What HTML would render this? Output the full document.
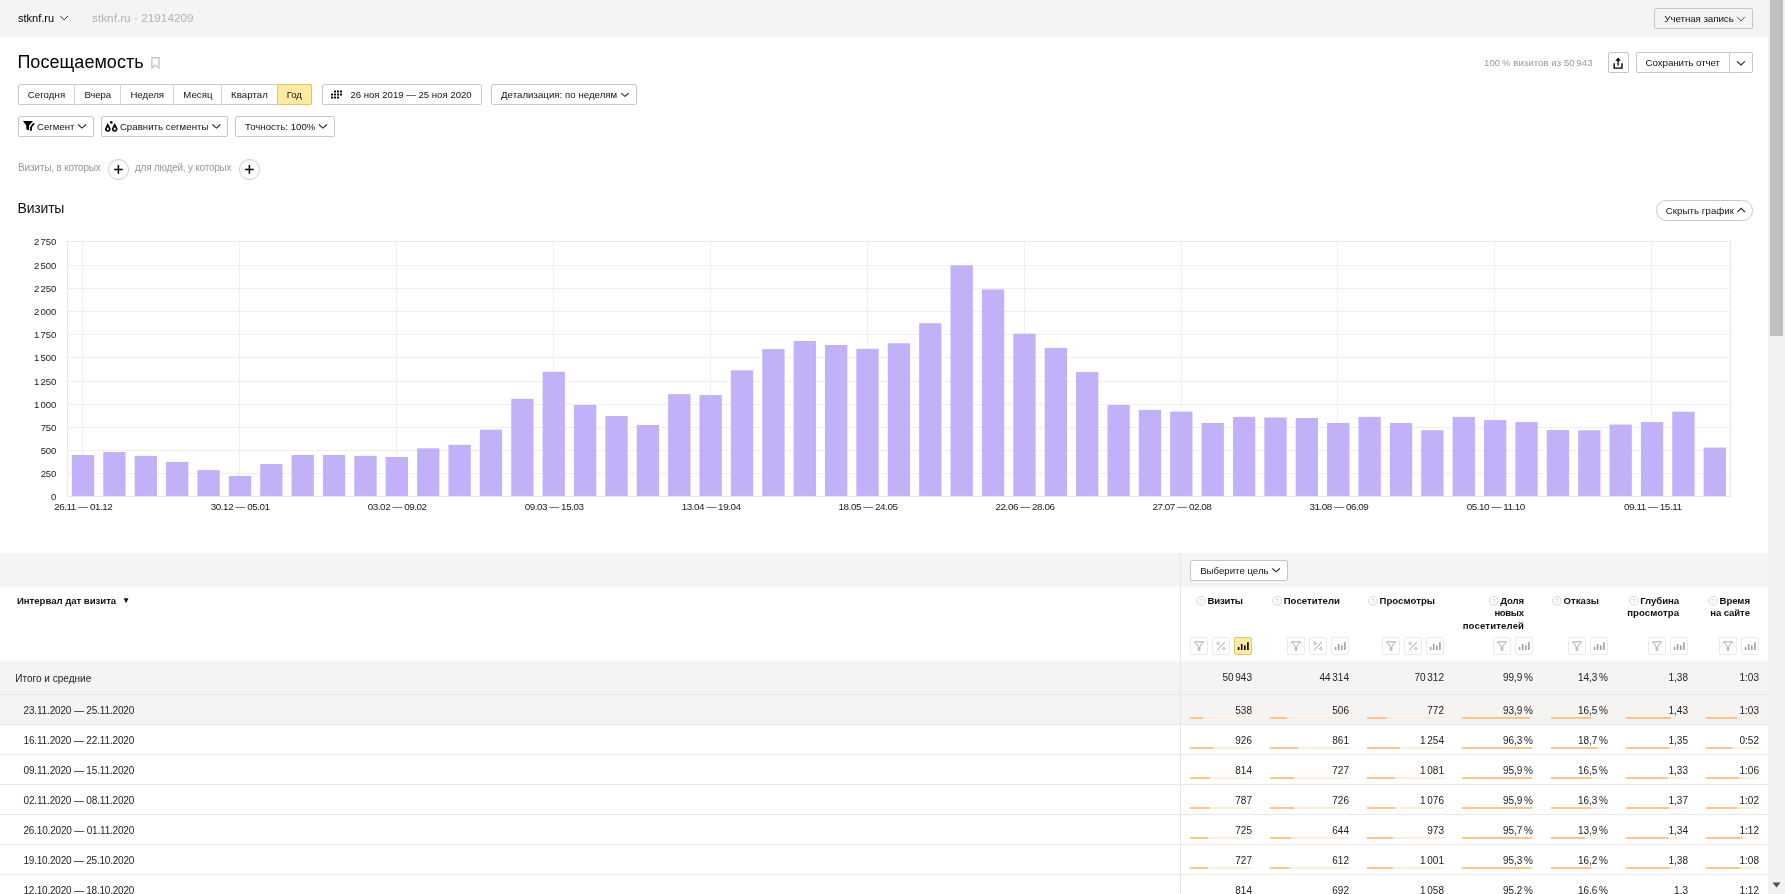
<!DOCTYPE html>
<html><head><meta charset="utf-8"><style>
*{margin:0;padding:0;box-sizing:border-box}
html,body{width:1785px;height:894px;overflow:hidden;background:#fff;font-family:"Liberation Sans", sans-serif;color:#000}
.a{position:absolute}
svg.a{overflow:visible}
.t{position:absolute;white-space:nowrap}
.trk{position:absolute;height:2px;background:#ffefe0}
.trk i{display:block;height:2px;background:#ffc48c}
</style></head><body>
<div id="root" style="position:absolute;left:0;top:0;width:1785px;height:894px;background:#fff;will-change:transform">
<div class="a" style="left:0;top:0;width:1768px;height:37px;background:#f5f4f2"></div>
<div class="t" style="top:13.08px;font-size:11px;line-height:11px;color:#000;left:18.00px;">stknf.ru</div>
<div class="t" style="top:13.21px;font-size:11.8px;line-height:11.8px;color:#b3b3b3;left:92.00px;">stknf.ru · 21914209</div>
<div class="a" style="left:1654px;top:8px;width:99px;height:21px;background:#f5f4f2;border:1px solid #c6c6c6;border-radius:2px;"></div>
<div class="t" style="top:13.70px;font-size:9.8px;line-height:9.8px;color:#111;letter-spacing:-0.082px;left:1664.30px;">Учетная запись</div>
<svg class="a" style="left:0;top:0" width="1785" height="894"><polyline points="60.2,16 64.1,19.8 68,16" fill="none" stroke="#222" stroke-width="0.95"/><polyline points="1737.2,16.9 1741,21 1744.8,16.9" fill="none" stroke="#333" stroke-width="0.85"/></svg>
<div class="a" style="left:1768px;top:0;width:17px;height:894px;background:#f1f1f1"></div>
<div class="a" style="left:1770px;top:0;width:13px;height:336px;background:#c1c1c1"></div>
<svg class="a" style="left:0;top:0" width="1785" height="894"><polygon points="1772.5,882.5 1780.5,882.5 1776.5,887.5" fill="#505050"/></svg>
<div class="t" style="top:52.55px;font-size:18px;line-height:18px;color:#000;letter-spacing:0.037px;left:17.40px;">Посещаемость</div>
<svg class="a" style="left:0;top:0" width="1785" height="894"><path d="M151.9,57.8 H159 V68 L155.45,65.2 L151.9,68 Z" fill="none" stroke="#c8c8c8" stroke-width="1.4"/></svg>
<div class="t" style="top:57.87px;font-size:9.6px;line-height:9.6px;color:#999;letter-spacing:0.061px;right:192.44px;text-align:right;">100 % визитов из 50 943</div>
<div class="a" style="left:1608px;top:52px;width:21px;height:21px;background:#fff;border:1px solid #c6c6c6;border-radius:2px;"></div>
<svg class="a" style="left:0;top:0" width="1785" height="894"><path d="M1614.2,63.2 V68.1 H1622 V63.2" fill="none" stroke="#000" stroke-width="1.35"/><path d="M1618.1,65.6 V60" stroke="#000" stroke-width="1.35"/><polygon points="1615.3,60.8 1618.1,57.4 1620.9,60.8" fill="#000"/></svg>
<div class="a" style="left:1636px;top:52px;width:117px;height:21px;background:#fff;border:1px solid #c6c6c6;border-radius:2px;"></div>
<div class="a" style="left:1729px;top:52px;width:1px;height:21px;background:#d2d2d2"></div>
<div class="t" style="top:57.80px;font-size:9.8px;line-height:9.8px;color:#111;letter-spacing:-0.090px;left:1645.50px;">Сохранить отчет</div>
<svg class="a" style="left:0;top:0" width="1785" height="894"><polyline points="1737,61.4 1740.95,65.0 1744.9,61.4" fill="none" stroke="#222" stroke-width="1.05"/></svg>
<div class="a" style="left:18px;top:84px;width:294px;height:21px;background:#fff;border:1px solid #c9c9c9;border-radius:2px;"></div>
<div class="a" style="left:74px;top:84px;width:1px;height:21px;background:#d6d6d6"></div>
<div class="a" style="left:120px;top:84px;width:1px;height:21px;background:#d6d6d6"></div>
<div class="a" style="left:173px;top:84px;width:1px;height:21px;background:#d6d6d6"></div>
<div class="a" style="left:221px;top:84px;width:1px;height:21px;background:#d6d6d6"></div>
<div class="a" style="left:277px;top:84px;width:35px;height:21px;background:#ffeba0;border:1px solid #e3c565;border-radius:2px;"></div>
<div class="t" style="top:89.87px;font-size:9.6px;line-height:9.6px;color:#111;letter-spacing:0.085px;left:27.80px;">Сегодня</div>
<div class="t" style="top:89.87px;font-size:9.6px;line-height:9.6px;color:#111;letter-spacing:-0.101px;left:84.40px;">Вчера</div>
<div class="t" style="top:89.87px;font-size:9.6px;line-height:9.6px;color:#111;letter-spacing:0.043px;left:130.40px;">Неделя</div>
<div class="t" style="top:89.87px;font-size:9.6px;line-height:9.6px;color:#111;letter-spacing:0.090px;left:183.20px;">Месяц</div>
<div class="t" style="top:89.87px;font-size:9.6px;line-height:9.6px;color:#111;letter-spacing:0.086px;left:231.00px;">Квартал</div>
<div class="t" style="top:89.87px;font-size:9.6px;line-height:9.6px;color:#111;letter-spacing:-0.143px;left:286.80px;">Год</div>
<div class="a" style="left:322px;top:84px;width:160px;height:21px;background:#fff;border:1px solid #c9c9c9;border-radius:2px;"></div>
<svg class="a" style="left:0;top:0" width="1785" height="894"><rect x="331" y="93.5" width="2" height="2" rx="0.5" fill="#000"/><rect x="331" y="96.5" width="2" height="2" rx="0.5" fill="#000"/><rect x="334" y="90.5" width="2" height="2" rx="0.5" fill="#000"/><rect x="334" y="93.5" width="2" height="2" rx="0.5" fill="#000"/><rect x="334" y="96.5" width="2" height="2" rx="0.5" fill="#000"/><rect x="337" y="90.5" width="2" height="2" rx="0.5" fill="#000"/><rect x="337" y="93.5" width="2" height="2" rx="0.5" fill="#000"/><rect x="337" y="96.5" width="2" height="2" rx="0.5" fill="#000"/><rect x="340" y="90.5" width="2" height="2" rx="0.5" fill="#000"/><rect x="340" y="93.5" width="2" height="2" rx="0.5" fill="#000"/></svg>
<div class="t" style="top:89.87px;font-size:9.6px;line-height:9.6px;color:#111;left:350.40px;">26 ноя 2019 — 25 ноя 2020</div>
<div class="a" style="left:491px;top:84px;width:146px;height:21px;background:#fff;border:1px solid #c9c9c9;border-radius:2px;"></div>
<div class="t" style="top:89.87px;font-size:9.6px;line-height:9.6px;color:#111;letter-spacing:0.063px;left:501.00px;">Детализация: по неделям</div>
<svg class="a" style="left:0;top:0" width="1785" height="894"><polyline points="621.2,93.2 625.0,96.4 628.8000000000001,93.2" fill="none" stroke="#222" stroke-width="1.05"/></svg>
<div class="a" style="left:18px;top:116px;width:76px;height:21px;background:#fff;border:1px solid #c9c9c9;border-radius:2px;"></div>
<svg class="a" style="left:0;top:0" width="1785" height="894"><path d="M23,121.1 H33 L29.1,125.6 V130.6 L26.3,129.2 V125.6 Z" fill="#000"/><polygon points="32.9,123.2 34.9,123.2 31.9,127.4 31.9,130.8 30.1,130.8 30.1,126.9" fill="#000"/></svg>
<div class="t" style="top:121.87px;font-size:9.6px;line-height:9.6px;color:#111;left:37.10px;">Сегмент</div>
<svg class="a" style="left:0;top:0" width="1785" height="894"><polyline points="78,124.5 82.0,128.1 86,124.5" fill="none" stroke="#222" stroke-width="1.05"/></svg>
<div class="a" style="left:101px;top:116px;width:127px;height:21px;background:#fff;border:1px solid #c9c9c9;border-radius:2px;"></div>
<svg class="a" style="left:0;top:0" width="1785" height="894"><path d="M107.8,122.9 L105.2,128.2 A2.75,2.75 0 1 0 110.4,128.2 Z" fill="#000"/><path d="M114.7,122.9 L112.1,128.2 A2.75,2.75 0 1 0 117.3,128.2 Z" fill="#000"/><ellipse cx="107.8" cy="128.9" rx="1.1" ry="1.4" fill="#fff"/><ellipse cx="114.7" cy="128.9" rx="1.1" ry="1.4" fill="#fff"/><circle cx="111.3" cy="122.4" r="1.3" fill="#000"/></svg>
<div class="t" style="top:121.87px;font-size:9.6px;line-height:9.6px;color:#111;letter-spacing:0.055px;left:119.90px;">Сравнить сегменты</div>
<svg class="a" style="left:0;top:0" width="1785" height="894"><polyline points="212.4,124.5 216.4,128.1 220.4,124.5" fill="none" stroke="#222" stroke-width="1.05"/></svg>
<div class="a" style="left:235px;top:116px;width:100px;height:21px;background:#fff;border:1px solid #c9c9c9;border-radius:2px;"></div>
<div class="t" style="top:121.87px;font-size:9.6px;line-height:9.6px;color:#111;letter-spacing:0.033px;left:245.00px;">Точность: 100%</div>
<svg class="a" style="left:0;top:0" width="1785" height="894"><polyline points="318.8,124.5 322.90000000000003,128.1 327.0,124.5" fill="none" stroke="#222" stroke-width="1.05"/></svg>
<div class="t" style="top:162.63px;font-size:10px;line-height:10px;color:#999;letter-spacing:-0.166px;left:18.00px;">Визиты, в которых</div>
<div class="t" style="top:162.63px;font-size:10px;line-height:10px;color:#999;letter-spacing:-0.232px;left:135.00px;">для людей, у которых</div>
<div class="a" style="left:108.0px;top:159px;width:20.8px;height:20.8px;border:1px solid #c9c9c9;border-radius:50%"></div>
<svg class="a" style="left:0;top:0" width="1785" height="894"><path d="M114.1,169.4 H122.7 M118.4,165.1 V173.7" stroke="#000" stroke-width="1.5"/></svg>
<div class="a" style="left:239.0px;top:159px;width:20.8px;height:20.8px;border:1px solid #c9c9c9;border-radius:50%"></div>
<svg class="a" style="left:0;top:0" width="1785" height="894"><path d="M245.1,169.4 H253.7 M249.4,165.1 V173.7" stroke="#000" stroke-width="1.5"/></svg>
<div class="t" style="top:201.04px;font-size:14px;line-height:14px;color:#111;letter-spacing:-0.214px;left:17.60px;">Визиты</div>
<div class="a" style="left:1656px;top:200px;width:97px;height:21px;background:#fff;border:1px solid #c9c9c9;border-radius:11px;"></div>
<div class="t" style="top:205.87px;font-size:9.6px;line-height:9.6px;color:#111;letter-spacing:0.093px;left:1665.80px;">Скрыть график</div>
<svg class="a" style="left:0;top:0" width="1785" height="894"><polyline points="1737.3,212.10000000000002 1741.2,208.3 1745.1,212.10000000000002" fill="none" stroke="#222" stroke-width="1.05"/></svg>
<svg class="a" style="left:0;top:0" width="1768" height="894" font-family='"Liberation Sans", sans-serif'><line x1="67" y1="473.5" x2="1731" y2="473.5" stroke="#efefef" stroke-width="1"/><line x1="67" y1="450.5" x2="1731" y2="450.5" stroke="#efefef" stroke-width="1"/><line x1="67" y1="427.5" x2="1731" y2="427.5" stroke="#efefef" stroke-width="1"/><line x1="67" y1="404.5" x2="1731" y2="404.5" stroke="#efefef" stroke-width="1"/><line x1="67" y1="381.5" x2="1731" y2="381.5" stroke="#efefef" stroke-width="1"/><line x1="67" y1="357.5" x2="1731" y2="357.5" stroke="#efefef" stroke-width="1"/><line x1="67" y1="334.5" x2="1731" y2="334.5" stroke="#efefef" stroke-width="1"/><line x1="67" y1="311.5" x2="1731" y2="311.5" stroke="#efefef" stroke-width="1"/><line x1="67" y1="288.5" x2="1731" y2="288.5" stroke="#efefef" stroke-width="1"/><line x1="67" y1="265.5" x2="1731" y2="265.5" stroke="#efefef" stroke-width="1"/><line x1="82.5" y1="242" x2="82.5" y2="496" stroke="#efefef" stroke-width="1"/><line x1="239.5" y1="242" x2="239.5" y2="496" stroke="#efefef" stroke-width="1"/><line x1="396.5" y1="242" x2="396.5" y2="496" stroke="#efefef" stroke-width="1"/><line x1="553.5" y1="242" x2="553.5" y2="496" stroke="#efefef" stroke-width="1"/><line x1="710.5" y1="242" x2="710.5" y2="496" stroke="#efefef" stroke-width="1"/><line x1="867.5" y1="242" x2="867.5" y2="496" stroke="#efefef" stroke-width="1"/><line x1="1024.5" y1="242" x2="1024.5" y2="496" stroke="#efefef" stroke-width="1"/><line x1="1181.5" y1="242" x2="1181.5" y2="496" stroke="#efefef" stroke-width="1"/><line x1="1337.5" y1="242" x2="1337.5" y2="496" stroke="#efefef" stroke-width="1"/><line x1="1494.5" y1="242" x2="1494.5" y2="496" stroke="#efefef" stroke-width="1"/><line x1="1651.5" y1="242" x2="1651.5" y2="496" stroke="#efefef" stroke-width="1"/><rect x="67.5" y="241.5" width="1663" height="255" fill="none" stroke="#e8e8e8" stroke-width="1"/><rect x="71.90" y="454.98" width="22.3" height="40.92" fill="#c2b0f8"/><rect x="103.28" y="452.07" width="22.3" height="43.83" fill="#c2b0f8"/><rect x="134.66" y="455.85" width="22.3" height="40.05" fill="#c2b0f8"/><rect x="166.04" y="461.96" width="22.3" height="33.94" fill="#c2b0f8"/><rect x="197.42" y="470.11" width="22.3" height="25.79" fill="#c2b0f8"/><rect x="228.80" y="475.93" width="22.3" height="19.97" fill="#c2b0f8"/><rect x="260.18" y="464.00" width="22.3" height="31.90" fill="#c2b0f8"/><rect x="291.56" y="454.98" width="22.3" height="40.92" fill="#c2b0f8"/><rect x="322.94" y="454.98" width="22.3" height="40.92" fill="#c2b0f8"/><rect x="354.32" y="455.85" width="22.3" height="40.05" fill="#c2b0f8"/><rect x="385.70" y="457.02" width="22.3" height="38.88" fill="#c2b0f8"/><rect x="417.08" y="448.29" width="22.3" height="47.61" fill="#c2b0f8"/><rect x="448.46" y="444.80" width="22.3" height="51.10" fill="#c2b0f8"/><rect x="479.84" y="429.67" width="22.3" height="66.23" fill="#c2b0f8"/><rect x="511.22" y="398.84" width="22.3" height="97.06" fill="#c2b0f8"/><rect x="542.60" y="371.78" width="22.3" height="124.12" fill="#c2b0f8"/><rect x="573.98" y="404.95" width="22.3" height="90.95" fill="#c2b0f8"/><rect x="605.36" y="416.00" width="22.3" height="79.90" fill="#c2b0f8"/><rect x="636.74" y="425.02" width="22.3" height="70.88" fill="#c2b0f8"/><rect x="668.12" y="394.18" width="22.3" height="101.72" fill="#c2b0f8"/><rect x="699.50" y="395.05" width="22.3" height="100.85" fill="#c2b0f8"/><rect x="730.88" y="370.33" width="22.3" height="125.57" fill="#c2b0f8"/><rect x="762.26" y="349.09" width="22.3" height="146.81" fill="#c2b0f8"/><rect x="793.64" y="340.95" width="22.3" height="154.95" fill="#c2b0f8"/><rect x="825.02" y="345.02" width="22.3" height="150.88" fill="#c2b0f8"/><rect x="856.40" y="348.80" width="22.3" height="147.10" fill="#c2b0f8"/><rect x="887.78" y="343.27" width="22.3" height="152.63" fill="#c2b0f8"/><rect x="919.16" y="323.20" width="22.3" height="172.70" fill="#c2b0f8"/><rect x="950.54" y="265.31" width="22.3" height="230.59" fill="#c2b0f8"/><rect x="981.92" y="289.45" width="22.3" height="206.45" fill="#c2b0f8"/><rect x="1013.30" y="333.67" width="22.3" height="162.23" fill="#c2b0f8"/><rect x="1044.68" y="347.93" width="22.3" height="147.97" fill="#c2b0f8"/><rect x="1076.06" y="372.07" width="22.3" height="123.83" fill="#c2b0f8"/><rect x="1107.44" y="404.95" width="22.3" height="90.95" fill="#c2b0f8"/><rect x="1138.82" y="409.89" width="22.3" height="86.01" fill="#c2b0f8"/><rect x="1170.20" y="411.64" width="22.3" height="84.26" fill="#c2b0f8"/><rect x="1201.58" y="422.98" width="22.3" height="72.92" fill="#c2b0f8"/><rect x="1232.96" y="416.87" width="22.3" height="79.03" fill="#c2b0f8"/><rect x="1264.34" y="417.45" width="22.3" height="78.45" fill="#c2b0f8"/><rect x="1295.72" y="418.04" width="22.3" height="77.86" fill="#c2b0f8"/><rect x="1327.10" y="422.98" width="22.3" height="72.92" fill="#c2b0f8"/><rect x="1358.48" y="416.87" width="22.3" height="79.03" fill="#c2b0f8"/><rect x="1389.86" y="422.98" width="22.3" height="72.92" fill="#c2b0f8"/><rect x="1421.24" y="430.25" width="22.3" height="65.65" fill="#c2b0f8"/><rect x="1452.62" y="416.87" width="22.3" height="79.03" fill="#c2b0f8"/><rect x="1484.00" y="420.07" width="22.3" height="75.83" fill="#c2b0f8"/><rect x="1515.38" y="422.09" width="22.3" height="73.81" fill="#c2b0f8"/><rect x="1546.76" y="430.13" width="22.3" height="65.77" fill="#c2b0f8"/><rect x="1578.14" y="430.31" width="22.3" height="65.59" fill="#c2b0f8"/><rect x="1609.52" y="424.58" width="22.3" height="71.32" fill="#c2b0f8"/><rect x="1640.90" y="422.09" width="22.3" height="73.81" fill="#c2b0f8"/><rect x="1672.28" y="411.74" width="22.3" height="84.16" fill="#c2b0f8"/><rect x="1703.66" y="447.59" width="22.3" height="48.31" fill="#c2b0f8"/><text x="56.2" y="500.4" text-anchor="end" font-size="9.6" letter-spacing="-0.15" fill="#222">0</text><text x="56.2" y="477.4" text-anchor="end" font-size="9.6" letter-spacing="-0.15" fill="#222">250</text><text x="56.2" y="454.4" text-anchor="end" font-size="9.6" letter-spacing="-0.15" fill="#222">500</text><text x="56.2" y="431.4" text-anchor="end" font-size="9.6" letter-spacing="-0.15" fill="#222">750</text><text x="56.2" y="408.4" text-anchor="end" font-size="9.6" letter-spacing="-0.15" fill="#222">1 000</text><text x="56.2" y="385.4" text-anchor="end" font-size="9.6" letter-spacing="-0.15" fill="#222">1 250</text><text x="56.2" y="361.4" text-anchor="end" font-size="9.6" letter-spacing="-0.15" fill="#222">1 500</text><text x="56.2" y="338.4" text-anchor="end" font-size="9.6" letter-spacing="-0.15" fill="#222">1 750</text><text x="56.2" y="315.4" text-anchor="end" font-size="9.6" letter-spacing="-0.15" fill="#222">2 000</text><text x="56.2" y="292.4" text-anchor="end" font-size="9.6" letter-spacing="-0.15" fill="#222">2 250</text><text x="56.2" y="269.4" text-anchor="end" font-size="9.6" letter-spacing="-0.15" fill="#222">2 500</text><text x="56.2" y="245.4" text-anchor="end" font-size="9.6" letter-spacing="-0.15" fill="#222">2 750</text><text x="83.3" y="510.2" text-anchor="middle" font-size="9.9" letter-spacing="-0.45" fill="#222">26.11 — 01.12</text><text x="240.2" y="510.2" text-anchor="middle" font-size="9.9" letter-spacing="-0.45" fill="#222">30.12 — 05.01</text><text x="397.2" y="510.2" text-anchor="middle" font-size="9.9" letter-spacing="-0.45" fill="#222">03.02 — 09.02</text><text x="554.1" y="510.2" text-anchor="middle" font-size="9.9" letter-spacing="-0.45" fill="#222">09.03 — 15.03</text><text x="711.1" y="510.2" text-anchor="middle" font-size="9.9" letter-spacing="-0.45" fill="#222">13.04 — 19.04</text><text x="868.0" y="510.2" text-anchor="middle" font-size="9.9" letter-spacing="-0.45" fill="#222">18.05 — 24.05</text><text x="1025.0" y="510.2" text-anchor="middle" font-size="9.9" letter-spacing="-0.45" fill="#222">22.06 — 28.06</text><text x="1181.9" y="510.2" text-anchor="middle" font-size="9.9" letter-spacing="-0.45" fill="#222">27.07 — 02.08</text><text x="1338.9" y="510.2" text-anchor="middle" font-size="9.9" letter-spacing="-0.45" fill="#222">31.08 — 06.09</text><text x="1495.8" y="510.2" text-anchor="middle" font-size="9.9" letter-spacing="-0.45" fill="#222">05.10 — 11.10</text><text x="1652.8" y="510.2" text-anchor="middle" font-size="9.9" letter-spacing="-0.45" fill="#222">09.11 — 15.11</text></svg>
<div class="a" style="left:0;top:553px;width:1768px;height:34px;background:#f5f4f2"></div>
<div class="a" style="left:0;top:661px;width:1768px;height:63px;background:#f5f4f2"></div>
<div class="a" style="left:1180px;top:553px;width:1px;height:341px;background:#e6e6e6"></div>
<div class="a" style="left:1190px;top:560px;width:98px;height:21px;background:#fff;border:1px solid #c6c6c6;border-radius:2px;"></div>
<div class="t" style="top:566.17px;font-size:9.6px;line-height:9.6px;color:#111;letter-spacing:0.030px;left:1200.20px;">Выберите цель</div>
<svg class="a" style="left:0;top:0" width="1785" height="894"><polyline points="1272.4,568.5 1276.1000000000001,571.9 1279.8000000000002,568.5" fill="none" stroke="#222" stroke-width="1.05"/></svg>
<div class="t" style="top:595.87px;font-size:9.6px;line-height:9.6px;color:#111;font-weight:bold;letter-spacing:-0.033px;left:17.00px;">Интервал дат визита</div>
<svg class="a" style="left:0;top:0" width="1785" height="894"><polygon points="123.7,598.3 128.5,598.3 126.1,603.3" fill="#111"/></svg>
<div class="t" style="top:595.97px;font-size:9.6px;line-height:9.6px;color:#111;font-weight:bold;letter-spacing:-0.162px;right:542.16px;text-align:right;">Визиты</div>
<div class="a" style="left:1234px;top:637px;width:18px;height:18px;background:#ffeba0;border:1px solid #e2c667;border-radius:2px;"></div>
<div class="a" style="left:1212px;top:637px;width:18px;height:18px;background:#fff;border:1px solid #ebebeb;border-radius:2px;"></div>
<div class="a" style="left:1190px;top:637px;width:18px;height:18px;background:#fff;border:1px solid #ebebeb;border-radius:2px;"></div>
<div class="t" style="top:595.97px;font-size:9.6px;line-height:9.6px;color:#111;font-weight:bold;letter-spacing:0.063px;right:444.94px;text-align:right;">Посетители</div>
<div class="a" style="left:1331px;top:637px;width:18px;height:18px;background:#fff;border:1px solid #ebebeb;border-radius:2px;"></div>
<div class="a" style="left:1309px;top:637px;width:18px;height:18px;background:#fff;border:1px solid #ebebeb;border-radius:2px;"></div>
<div class="a" style="left:1287px;top:637px;width:18px;height:18px;background:#fff;border:1px solid #ebebeb;border-radius:2px;"></div>
<div class="t" style="top:595.97px;font-size:9.6px;line-height:9.6px;color:#111;font-weight:bold;letter-spacing:0.049px;right:349.95px;text-align:right;">Просмотры</div>
<div class="a" style="left:1426px;top:637px;width:18px;height:18px;background:#fff;border:1px solid #ebebeb;border-radius:2px;"></div>
<div class="a" style="left:1404px;top:637px;width:18px;height:18px;background:#fff;border:1px solid #ebebeb;border-radius:2px;"></div>
<div class="a" style="left:1382px;top:637px;width:18px;height:18px;background:#fff;border:1px solid #ebebeb;border-radius:2px;"></div>
<div class="t" style="top:595.97px;font-size:9.6px;line-height:9.6px;color:#111;font-weight:bold;letter-spacing:-0.194px;right:261.19px;text-align:right;">Доля</div>
<div class="t" style="top:608.42px;font-size:9.6px;line-height:9.6px;color:#111;font-weight:bold;letter-spacing:-0.375px;right:261.38px;text-align:right;">новых</div>
<div class="t" style="top:620.87px;font-size:9.6px;line-height:9.6px;color:#111;font-weight:bold;letter-spacing:0.146px;right:260.85px;text-align:right;">посетителей</div>
<div class="a" style="left:1515px;top:637px;width:18px;height:18px;background:#fff;border:1px solid #ebebeb;border-radius:2px;"></div>
<div class="a" style="left:1493px;top:637px;width:18px;height:18px;background:#fff;border:1px solid #ebebeb;border-radius:2px;"></div>
<div class="t" style="top:595.97px;font-size:9.6px;line-height:9.6px;color:#111;font-weight:bold;letter-spacing:0.020px;right:185.98px;text-align:right;">Отказы</div>
<div class="a" style="left:1590px;top:637px;width:18px;height:18px;background:#fff;border:1px solid #ebebeb;border-radius:2px;"></div>
<div class="a" style="left:1568px;top:637px;width:18px;height:18px;background:#fff;border:1px solid #ebebeb;border-radius:2px;"></div>
<div class="t" style="top:595.97px;font-size:9.6px;line-height:9.6px;color:#111;font-weight:bold;letter-spacing:-0.074px;right:106.07px;text-align:right;">Глубина</div>
<div class="t" style="top:608.42px;font-size:9.6px;line-height:9.6px;color:#111;font-weight:bold;letter-spacing:0.082px;right:105.92px;text-align:right;">просмотра</div>
<div class="a" style="left:1670px;top:637px;width:18px;height:18px;background:#fff;border:1px solid #ebebeb;border-radius:2px;"></div>
<div class="a" style="left:1648px;top:637px;width:18px;height:18px;background:#fff;border:1px solid #ebebeb;border-radius:2px;"></div>
<div class="t" style="top:595.97px;font-size:9.6px;line-height:9.6px;color:#111;font-weight:bold;letter-spacing:-0.053px;right:35.05px;text-align:right;">Время</div>
<div class="t" style="top:608.42px;font-size:9.6px;line-height:9.6px;color:#111;font-weight:bold;letter-spacing:-0.106px;right:35.11px;text-align:right;">на сайте</div>
<div class="a" style="left:1741px;top:637px;width:18px;height:18px;background:#fff;border:1px solid #ebebeb;border-radius:2px;"></div>
<div class="a" style="left:1719px;top:637px;width:18px;height:18px;background:#fff;border:1px solid #ebebeb;border-radius:2px;"></div>
<svg class="a" style="left:0;top:0" width="1785" height="894" font-family='"Liberation Sans", sans-serif'><circle cx="1200.9" cy="600.8" r="4.3" fill="none" stroke="#d0d0d0" stroke-width="0.9"/><text x="1200.9" y="603.2" font-size="6" text-anchor="middle" fill="#c8c8c8">?</text><rect x="1237.8" y="647.0" width="1.6" height="3" fill="#000"/><rect x="1240.9" y="644.0" width="1.6" height="6" fill="#000"/><rect x="1244.0" y="645.4" width="1.6" height="4.6" fill="#000"/><rect x="1247.1" y="642.2" width="1.6" height="7.8" fill="#000"/><path d="M1225.0,641.8 L1217.0,650.2" stroke="#a0a0a0" stroke-width="0.9"/><circle cx="1218.2" cy="643.4" r="1.1" fill="none" stroke="#a0a0a0" stroke-width="0.8"/><circle cx="1223.8" cy="648.6" r="1.1" fill="none" stroke="#a0a0a0" stroke-width="0.8"/><path d="M1194.5,641.8 H1203.5 L1199.8,646.3 V650.3 H1198.2 V646.3 Z" fill="none" stroke="#a0a0a0" stroke-width="0.9"/><circle cx="1277.1" cy="600.8" r="4.3" fill="none" stroke="#d0d0d0" stroke-width="0.9"/><text x="1277.1" y="603.2" font-size="6" text-anchor="middle" fill="#c8c8c8">?</text><rect x="1334.8" y="647.0" width="1.6" height="3" fill="#a0a0a0"/><rect x="1337.9" y="644.0" width="1.6" height="6" fill="#a0a0a0"/><rect x="1341.0" y="645.4" width="1.6" height="4.6" fill="#a0a0a0"/><rect x="1344.1" y="642.2" width="1.6" height="7.8" fill="#a0a0a0"/><path d="M1322.0,641.8 L1314.0,650.2" stroke="#a0a0a0" stroke-width="0.9"/><circle cx="1315.2" cy="643.4" r="1.1" fill="none" stroke="#a0a0a0" stroke-width="0.8"/><circle cx="1320.8" cy="648.6" r="1.1" fill="none" stroke="#a0a0a0" stroke-width="0.8"/><path d="M1291.5,641.8 H1300.5 L1296.8,646.3 V650.3 H1295.2 V646.3 Z" fill="none" stroke="#a0a0a0" stroke-width="0.9"/><circle cx="1372.9" cy="600.8" r="4.3" fill="none" stroke="#d0d0d0" stroke-width="0.9"/><text x="1372.9" y="603.2" font-size="6" text-anchor="middle" fill="#c8c8c8">?</text><rect x="1429.8" y="647.0" width="1.6" height="3" fill="#a0a0a0"/><rect x="1432.9" y="644.0" width="1.6" height="6" fill="#a0a0a0"/><rect x="1436.0" y="645.4" width="1.6" height="4.6" fill="#a0a0a0"/><rect x="1439.1" y="642.2" width="1.6" height="7.8" fill="#a0a0a0"/><path d="M1417.0,641.8 L1409.0,650.2" stroke="#a0a0a0" stroke-width="0.9"/><circle cx="1410.2" cy="643.4" r="1.1" fill="none" stroke="#a0a0a0" stroke-width="0.8"/><circle cx="1415.8" cy="648.6" r="1.1" fill="none" stroke="#a0a0a0" stroke-width="0.8"/><path d="M1386.5,641.8 H1395.5 L1391.8,646.3 V650.3 H1390.2 V646.3 Z" fill="none" stroke="#a0a0a0" stroke-width="0.9"/><circle cx="1493.8" cy="600.8" r="4.3" fill="none" stroke="#d0d0d0" stroke-width="0.9"/><text x="1493.8" y="603.2" font-size="6" text-anchor="middle" fill="#c8c8c8">?</text><rect x="1518.8" y="647.0" width="1.6" height="3" fill="#a0a0a0"/><rect x="1521.9" y="644.0" width="1.6" height="6" fill="#a0a0a0"/><rect x="1525.0" y="645.4" width="1.6" height="4.6" fill="#a0a0a0"/><rect x="1528.1" y="642.2" width="1.6" height="7.8" fill="#a0a0a0"/><path d="M1497.5,641.8 H1506.5 L1502.8,646.3 V650.3 H1501.2 V646.3 Z" fill="none" stroke="#a0a0a0" stroke-width="0.9"/><circle cx="1557.0" cy="600.8" r="4.3" fill="none" stroke="#d0d0d0" stroke-width="0.9"/><text x="1557.0" y="603.2" font-size="6" text-anchor="middle" fill="#c8c8c8">?</text><rect x="1593.8" y="647.0" width="1.6" height="3" fill="#a0a0a0"/><rect x="1596.9" y="644.0" width="1.6" height="6" fill="#a0a0a0"/><rect x="1600.0" y="645.4" width="1.6" height="4.6" fill="#a0a0a0"/><rect x="1603.1" y="642.2" width="1.6" height="7.8" fill="#a0a0a0"/><path d="M1572.5,641.8 H1581.5 L1577.8,646.3 V650.3 H1576.2 V646.3 Z" fill="none" stroke="#a0a0a0" stroke-width="0.9"/><circle cx="1633.7" cy="600.8" r="4.3" fill="none" stroke="#d0d0d0" stroke-width="0.9"/><text x="1633.7" y="603.2" font-size="6" text-anchor="middle" fill="#c8c8c8">?</text><rect x="1673.8" y="647.0" width="1.6" height="3" fill="#a0a0a0"/><rect x="1676.9" y="644.0" width="1.6" height="6" fill="#a0a0a0"/><rect x="1680.0" y="645.4" width="1.6" height="4.6" fill="#a0a0a0"/><rect x="1683.1" y="642.2" width="1.6" height="7.8" fill="#a0a0a0"/><path d="M1652.5,641.8 H1661.5 L1657.8,646.3 V650.3 H1656.2 V646.3 Z" fill="none" stroke="#a0a0a0" stroke-width="0.9"/><circle cx="1713.0" cy="600.8" r="4.3" fill="none" stroke="#d0d0d0" stroke-width="0.9"/><text x="1713.0" y="603.2" font-size="6" text-anchor="middle" fill="#c8c8c8">?</text><rect x="1744.8" y="647.0" width="1.6" height="3" fill="#a0a0a0"/><rect x="1747.9" y="644.0" width="1.6" height="6" fill="#a0a0a0"/><rect x="1751.0" y="645.4" width="1.6" height="4.6" fill="#a0a0a0"/><rect x="1754.1" y="642.2" width="1.6" height="7.8" fill="#a0a0a0"/><path d="M1723.5,641.8 H1732.5 L1728.8,646.3 V650.3 H1727.2 V646.3 Z" fill="none" stroke="#a0a0a0" stroke-width="0.9"/></svg>
<div class="t" style="top:674.33px;font-size:10px;line-height:10px;color:#222;letter-spacing:0.010px;left:15.30px;">Итого и средние</div>
<div class="t" style="top:673.03px;font-size:10px;line-height:10px;color:#222;right:533.00px;text-align:right;">50 943</div>
<div class="t" style="top:673.03px;font-size:10px;line-height:10px;color:#222;right:436.00px;text-align:right;">44 314</div>
<div class="t" style="top:673.03px;font-size:10px;line-height:10px;color:#222;right:341.00px;text-align:right;">70 312</div>
<div class="t" style="top:673.03px;font-size:10px;line-height:10px;color:#222;right:252.00px;text-align:right;">99,9 %</div>
<div class="t" style="top:673.03px;font-size:10px;line-height:10px;color:#222;right:177.00px;text-align:right;">14,3 %</div>
<div class="t" style="top:673.03px;font-size:10px;line-height:10px;color:#222;right:97.00px;text-align:right;">1,38</div>
<div class="t" style="top:673.03px;font-size:10px;line-height:10px;color:#222;right:26.00px;text-align:right;">1:03</div>
<div class="a" style="left:0;top:694px;width:1768px;height:1px;background:#e9e9e9"></div>
<div class="t" style="top:705.53px;font-size:10px;line-height:10px;color:#222;letter-spacing:-0.153px;left:23.50px;">23.11.2020 — 25.11.2020</div>
<div class="t" style="top:705.53px;font-size:10px;line-height:10px;color:#222;right:533.00px;text-align:right;">538</div>
<div class="trk" style="left:1190px;top:717px;width:62px"><i style="width:13.3px"></i></div>
<div class="t" style="top:705.53px;font-size:10px;line-height:10px;color:#222;right:436.00px;text-align:right;">506</div>
<div class="trk" style="left:1270px;top:717px;width:79px"><i style="width:16.5px"></i></div>
<div class="t" style="top:705.53px;font-size:10px;line-height:10px;color:#222;right:341.00px;text-align:right;">772</div>
<div class="trk" style="left:1367px;top:717px;width:77px"><i style="width:20.3px"></i></div>
<div class="t" style="top:705.53px;font-size:10px;line-height:10px;color:#222;right:252.00px;text-align:right;">93,9 %</div>
<div class="trk" style="left:1462px;top:717px;width:71px"><i style="width:68.4px"></i></div>
<div class="t" style="top:705.53px;font-size:10px;line-height:10px;color:#222;right:177.00px;text-align:right;">16,5 %</div>
<div class="trk" style="left:1551px;top:717px;width:57px"><i style="width:40.2px"></i></div>
<div class="t" style="top:705.53px;font-size:10px;line-height:10px;color:#222;right:97.00px;text-align:right;">1,43</div>
<div class="trk" style="left:1626px;top:717px;width:62px"><i style="width:45.2px"></i></div>
<div class="t" style="top:705.53px;font-size:10px;line-height:10px;color:#222;right:26.00px;text-align:right;">1:03</div>
<div class="trk" style="left:1706px;top:717px;width:53px"><i style="width:31.2px"></i></div>
<div class="a" style="left:0;top:724px;width:1768px;height:1px;background:#e9e9e9"></div>
<div class="t" style="top:735.53px;font-size:10px;line-height:10px;color:#222;letter-spacing:-0.153px;left:23.50px;">16.11.2020 — 22.11.2020</div>
<div class="t" style="top:735.53px;font-size:10px;line-height:10px;color:#222;right:533.00px;text-align:right;">926</div>
<div class="trk" style="left:1190px;top:747px;width:62px"><i style="width:22.9px"></i></div>
<div class="t" style="top:735.53px;font-size:10px;line-height:10px;color:#222;right:436.00px;text-align:right;">861</div>
<div class="trk" style="left:1270px;top:747px;width:79px"><i style="width:28.1px"></i></div>
<div class="t" style="top:735.53px;font-size:10px;line-height:10px;color:#222;right:341.00px;text-align:right;">1 254</div>
<div class="trk" style="left:1367px;top:747px;width:77px"><i style="width:33.0px"></i></div>
<div class="t" style="top:735.53px;font-size:10px;line-height:10px;color:#222;right:252.00px;text-align:right;">96,3 %</div>
<div class="trk" style="left:1462px;top:747px;width:71px"><i style="width:70.1px"></i></div>
<div class="t" style="top:735.53px;font-size:10px;line-height:10px;color:#222;right:177.00px;text-align:right;">18,7 %</div>
<div class="trk" style="left:1551px;top:747px;width:57px"><i style="width:45.6px"></i></div>
<div class="t" style="top:735.53px;font-size:10px;line-height:10px;color:#222;right:97.00px;text-align:right;">1,35</div>
<div class="trk" style="left:1626px;top:747px;width:62px"><i style="width:42.7px"></i></div>
<div class="t" style="top:735.53px;font-size:10px;line-height:10px;color:#222;right:26.00px;text-align:right;">0:52</div>
<div class="trk" style="left:1706px;top:747px;width:53px"><i style="width:25.8px"></i></div>
<div class="a" style="left:0;top:754px;width:1768px;height:1px;background:#e9e9e9"></div>
<div class="t" style="top:765.53px;font-size:10px;line-height:10px;color:#222;letter-spacing:-0.153px;left:23.50px;">09.11.2020 — 15.11.2020</div>
<div class="t" style="top:765.53px;font-size:10px;line-height:10px;color:#222;right:533.00px;text-align:right;">814</div>
<div class="trk" style="left:1190px;top:777px;width:62px"><i style="width:20.1px"></i></div>
<div class="t" style="top:765.53px;font-size:10px;line-height:10px;color:#222;right:436.00px;text-align:right;">727</div>
<div class="trk" style="left:1270px;top:777px;width:79px"><i style="width:23.8px"></i></div>
<div class="t" style="top:765.53px;font-size:10px;line-height:10px;color:#222;right:341.00px;text-align:right;">1 081</div>
<div class="trk" style="left:1367px;top:777px;width:77px"><i style="width:28.4px"></i></div>
<div class="t" style="top:765.53px;font-size:10px;line-height:10px;color:#222;right:252.00px;text-align:right;">95,9 %</div>
<div class="trk" style="left:1462px;top:777px;width:71px"><i style="width:69.8px"></i></div>
<div class="t" style="top:765.53px;font-size:10px;line-height:10px;color:#222;right:177.00px;text-align:right;">16,5 %</div>
<div class="trk" style="left:1551px;top:777px;width:57px"><i style="width:40.2px"></i></div>
<div class="t" style="top:765.53px;font-size:10px;line-height:10px;color:#222;right:97.00px;text-align:right;">1,33</div>
<div class="trk" style="left:1626px;top:777px;width:62px"><i style="width:42.1px"></i></div>
<div class="t" style="top:765.53px;font-size:10px;line-height:10px;color:#222;right:26.00px;text-align:right;">1:06</div>
<div class="trk" style="left:1706px;top:777px;width:53px"><i style="width:32.7px"></i></div>
<div class="a" style="left:0;top:784px;width:1768px;height:1px;background:#e9e9e9"></div>
<div class="t" style="top:795.53px;font-size:10px;line-height:10px;color:#222;letter-spacing:-0.153px;left:23.50px;">02.11.2020 — 08.11.2020</div>
<div class="t" style="top:795.53px;font-size:10px;line-height:10px;color:#222;right:533.00px;text-align:right;">787</div>
<div class="trk" style="left:1190px;top:807px;width:62px"><i style="width:19.5px"></i></div>
<div class="t" style="top:795.53px;font-size:10px;line-height:10px;color:#222;right:436.00px;text-align:right;">726</div>
<div class="trk" style="left:1270px;top:807px;width:79px"><i style="width:23.7px"></i></div>
<div class="t" style="top:795.53px;font-size:10px;line-height:10px;color:#222;right:341.00px;text-align:right;">1 076</div>
<div class="trk" style="left:1367px;top:807px;width:77px"><i style="width:28.3px"></i></div>
<div class="t" style="top:795.53px;font-size:10px;line-height:10px;color:#222;right:252.00px;text-align:right;">95,9 %</div>
<div class="trk" style="left:1462px;top:807px;width:71px"><i style="width:69.8px"></i></div>
<div class="t" style="top:795.53px;font-size:10px;line-height:10px;color:#222;right:177.00px;text-align:right;">16,3 %</div>
<div class="trk" style="left:1551px;top:807px;width:57px"><i style="width:39.7px"></i></div>
<div class="t" style="top:795.53px;font-size:10px;line-height:10px;color:#222;right:97.00px;text-align:right;">1,37</div>
<div class="trk" style="left:1626px;top:807px;width:62px"><i style="width:43.3px"></i></div>
<div class="t" style="top:795.53px;font-size:10px;line-height:10px;color:#222;right:26.00px;text-align:right;">1:02</div>
<div class="trk" style="left:1706px;top:807px;width:53px"><i style="width:30.7px"></i></div>
<div class="a" style="left:0;top:814px;width:1768px;height:1px;background:#e9e9e9"></div>
<div class="t" style="top:825.53px;font-size:10px;line-height:10px;color:#222;letter-spacing:-0.187px;left:23.50px;">26.10.2020 — 01.11.2020</div>
<div class="t" style="top:825.53px;font-size:10px;line-height:10px;color:#222;right:533.00px;text-align:right;">725</div>
<div class="trk" style="left:1190px;top:837px;width:62px"><i style="width:17.9px"></i></div>
<div class="t" style="top:825.53px;font-size:10px;line-height:10px;color:#222;right:436.00px;text-align:right;">644</div>
<div class="trk" style="left:1270px;top:837px;width:79px"><i style="width:21.0px"></i></div>
<div class="t" style="top:825.53px;font-size:10px;line-height:10px;color:#222;right:341.00px;text-align:right;">973</div>
<div class="trk" style="left:1367px;top:837px;width:77px"><i style="width:25.6px"></i></div>
<div class="t" style="top:825.53px;font-size:10px;line-height:10px;color:#222;right:252.00px;text-align:right;">95,7 %</div>
<div class="trk" style="left:1462px;top:837px;width:71px"><i style="width:69.7px"></i></div>
<div class="t" style="top:825.53px;font-size:10px;line-height:10px;color:#222;right:177.00px;text-align:right;">13,9 %</div>
<div class="trk" style="left:1551px;top:837px;width:57px"><i style="width:33.9px"></i></div>
<div class="t" style="top:825.53px;font-size:10px;line-height:10px;color:#222;right:97.00px;text-align:right;">1,34</div>
<div class="trk" style="left:1626px;top:837px;width:62px"><i style="width:42.4px"></i></div>
<div class="t" style="top:825.53px;font-size:10px;line-height:10px;color:#222;right:26.00px;text-align:right;">1:12</div>
<div class="trk" style="left:1706px;top:837px;width:53px"><i style="width:35.7px"></i></div>
<div class="a" style="left:0;top:844px;width:1768px;height:1px;background:#e9e9e9"></div>
<div class="t" style="top:855.53px;font-size:10px;line-height:10px;color:#222;letter-spacing:-0.221px;left:23.50px;">19.10.2020 — 25.10.2020</div>
<div class="t" style="top:855.53px;font-size:10px;line-height:10px;color:#222;right:533.00px;text-align:right;">727</div>
<div class="trk" style="left:1190px;top:867px;width:62px"><i style="width:18.0px"></i></div>
<div class="t" style="top:855.53px;font-size:10px;line-height:10px;color:#222;right:436.00px;text-align:right;">612</div>
<div class="trk" style="left:1270px;top:867px;width:79px"><i style="width:20.0px"></i></div>
<div class="t" style="top:855.53px;font-size:10px;line-height:10px;color:#222;right:341.00px;text-align:right;">1 001</div>
<div class="trk" style="left:1367px;top:867px;width:77px"><i style="width:26.3px"></i></div>
<div class="t" style="top:855.53px;font-size:10px;line-height:10px;color:#222;right:252.00px;text-align:right;">95,3 %</div>
<div class="trk" style="left:1462px;top:867px;width:71px"><i style="width:69.4px"></i></div>
<div class="t" style="top:855.53px;font-size:10px;line-height:10px;color:#222;right:177.00px;text-align:right;">16,2 %</div>
<div class="trk" style="left:1551px;top:867px;width:57px"><i style="width:39.5px"></i></div>
<div class="t" style="top:855.53px;font-size:10px;line-height:10px;color:#222;right:97.00px;text-align:right;">1,38</div>
<div class="trk" style="left:1626px;top:867px;width:62px"><i style="width:43.7px"></i></div>
<div class="t" style="top:855.53px;font-size:10px;line-height:10px;color:#222;right:26.00px;text-align:right;">1:08</div>
<div class="trk" style="left:1706px;top:867px;width:53px"><i style="width:33.7px"></i></div>
<div class="a" style="left:0;top:874px;width:1768px;height:1px;background:#e9e9e9"></div>
<div class="t" style="top:885.53px;font-size:10px;line-height:10px;color:#222;letter-spacing:-0.221px;left:23.50px;">12.10.2020 — 18.10.2020</div>
<div class="t" style="top:885.53px;font-size:10px;line-height:10px;color:#222;right:533.00px;text-align:right;">814</div>
<div class="trk" style="left:1190px;top:897px;width:62px"><i style="width:20.1px"></i></div>
<div class="t" style="top:885.53px;font-size:10px;line-height:10px;color:#222;right:436.00px;text-align:right;">692</div>
<div class="trk" style="left:1270px;top:897px;width:79px"><i style="width:22.6px"></i></div>
<div class="t" style="top:885.53px;font-size:10px;line-height:10px;color:#222;right:341.00px;text-align:right;">1 058</div>
<div class="trk" style="left:1367px;top:897px;width:77px"><i style="width:27.8px"></i></div>
<div class="t" style="top:885.53px;font-size:10px;line-height:10px;color:#222;right:252.00px;text-align:right;">95,2 %</div>
<div class="trk" style="left:1462px;top:897px;width:71px"><i style="width:69.3px"></i></div>
<div class="t" style="top:885.53px;font-size:10px;line-height:10px;color:#222;right:177.00px;text-align:right;">16,6 %</div>
<div class="trk" style="left:1551px;top:897px;width:57px"><i style="width:40.4px"></i></div>
<div class="t" style="top:885.53px;font-size:10px;line-height:10px;color:#222;right:97.00px;text-align:right;">1,3</div>
<div class="trk" style="left:1626px;top:897px;width:62px"><i style="width:41.1px"></i></div>
<div class="t" style="top:885.53px;font-size:10px;line-height:10px;color:#222;right:26.00px;text-align:right;">1:12</div>
<div class="trk" style="left:1706px;top:897px;width:53px"><i style="width:35.7px"></i></div>
<div class="a" style="left:0;top:874px;width:1768px;height:1px;background:#e9e9e9"></div>
</div></body></html>
